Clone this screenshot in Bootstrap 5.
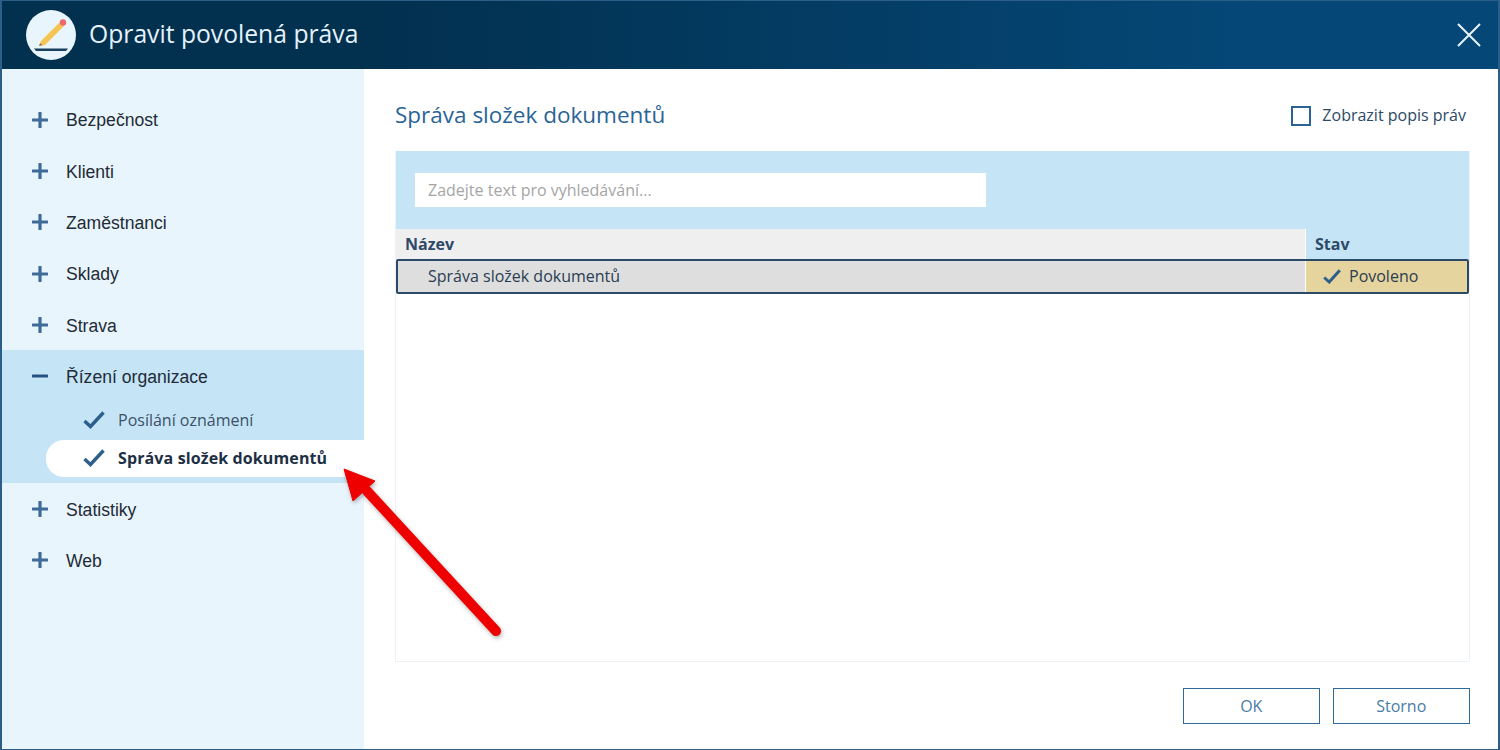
<!DOCTYPE html>
<html lang="cs">
<head>
<meta charset="utf-8">
<title>Opravit povolená práva</title>
<link href="https://cdn.jsdelivr.net/npm/bootstrap@5.3.0/dist/css/bootstrap.min.css" rel="stylesheet">
<style>
html,body{height:100%;margin:0;overflow:hidden}
body{font-family:"Open Sans","Liberation Sans",sans-serif;background:#fff}
.dlg{width:1500px;height:750px;border:1px solid #2b5f8a;border-left-width:2px;border-right-width:2px;position:relative;display:flex;flex-direction:column}
.dlg-head{height:68px;flex:none;background:linear-gradient(90deg,#02304f 0%,#02304f 25%,#054878 85%,#054878 100%);color:#e6f2fb;padding-left:24px;padding-right:17px}
.dlg-logo{width:50px;height:50px;flex:none;margin-right:13px}
.dlg-title{font-size:24.700px;line-height:1;margin-top:-1px}
.dlg-body{flex:1;min-height:0}
.side{width:362px;flex:none;background:#e9f5fc;padding-top:25px}
.tree-row{height:51.300px;padding-left:30px;padding-top:2px;font-family:"Liberation Sans",Arial,sans-serif;font-size:17.600px;color:#222b36}
.tree-row svg{width:16px;height:16px;margin-right:18px;margin-top:-2px;flex:none}
.tree-open{background:#c5e4f6;height:133px}
.tree-open .tree-row{height:51px}
.sub-row{height:37px;margin-left:44px;padding-left:37px;padding-bottom:2px;font-size:16px;color:#3d5166}
.sub-row svg{width:22px;height:18px;margin-right:13px;margin-bottom:-1px;flex:none}
.sub-first{height:39px}
.sub-active{background:#fff;border-radius:18px 0 0 18px;color:#1d2f44;font-weight:700;letter-spacing:.12px}
.content{flex:1;min-width:0;padding:29px 28px 24px 31px}
.pg-head{height:36px;margin-bottom:17px;padding-top:0}
.pg-title{font-size:22.500px;line-height:1;color:#2a6496;margin-top:-2px}
.chk{width:20px;height:20px;border:2px solid #2a6496;background:#fff;margin-right:11px;flex:none;margin-top:-1px}
.chk-label{font-size:16px;color:#2d4a66;margin-right:4px;margin-top:-2px}
.panel{height:511px;border:1px solid #edf2f8;border-top:0}
.search{height:78px;background:#c5e4f6;padding:22px 19px}
.search-in{width:571px;height:34px;background:#fff;color:#a5a5a5;font-size:16px;padding:0 13px;border:0;border-radius:0;box-shadow:none;font-family:inherit}
.search-in::placeholder{color:#a5a5a5;opacity:1}
.grid-head{height:30px;font-weight:700;font-size:16px;color:#2f4a68}
.gh-a{flex:1;background:#efefef;padding-left:9px}
.gh-b{width:163px;margin-left:1px;background:#c5e4f6;padding-left:9px}
.grid-row{height:34.500px;border:2px solid #2b4a68;border-radius:2px;font-size:16px;color:#2a3d52;background:#dedede}
.gr-a{flex:1;padding-left:30px}
.gr-b{width:162px;background:#e6d49e;border-left:1px solid #fff;padding-left:17px}
.gr-b svg{width:18px;height:15px;margin-right:8px;flex:none}
.dlg-foot{margin-top:25.500px;gap:12.500px}
.act{width:137.500px;height:36.500px;border:1.500px solid #2f6a9a;border-radius:0;background:#fff;color:#4a7ca5;font-size:16px;padding:0;font-family:inherit}
.arrow{position:absolute;left:0;top:0;pointer-events:none;filter:drop-shadow(1px 2px 2px rgba(0,0,0,.3))}
</style>
</head>
<body>
<div class="dlg">
  <div class="dlg-head d-flex align-items-center">
    <svg class="dlg-logo" viewBox="0 0 50 50">
      <circle cx="25" cy="25" r="25" fill="#e9f5fc"/>
      <path d="M8 39.500a25 25 0 0 0 2 2.500h30a25 25 0 0 0 2-2.500z" fill="#1b3f5f" transform="translate(0 -1)"/>
      <path d="M13 36l2-5L34 12l4 4L19 35z" fill="#f6c453"/>
      <path d="M13 36l1.200-3 2.300 2.300z" fill="#8a7d70"/>
      <circle cx="37" cy="12.500" r="3.200" fill="#ee6a6a"/>
    </svg>
    <div class="dlg-title">Opravit povolená práva</div>
    <svg class="ms-auto" width="24" height="24" viewBox="0 0 24 24"><path d="M1 1l22 22M23 1L1 23" stroke="#e9f3fa" stroke-width="2" fill="none"/></svg>
  </div>
  <div class="dlg-body d-flex">
    <div class="side">
      <div class="tree-row d-flex align-items-center"><svg viewBox="0 0 16 16"><path d="M8 1v14M1 8h14" stroke="#3f6b98" stroke-width="3.200" stroke-linecap="round"/></svg>Bezpečnost</div>
      <div class="tree-row d-flex align-items-center"><svg viewBox="0 0 16 16"><path d="M8 1v14M1 8h14" stroke="#3f6b98" stroke-width="3.200" stroke-linecap="round"/></svg>Klienti</div>
      <div class="tree-row d-flex align-items-center"><svg viewBox="0 0 16 16"><path d="M8 1v14M1 8h14" stroke="#3f6b98" stroke-width="3.200" stroke-linecap="round"/></svg>Zaměstnanci</div>
      <div class="tree-row d-flex align-items-center"><svg viewBox="0 0 16 16"><path d="M8 1v14M1 8h14" stroke="#3f6b98" stroke-width="3.200" stroke-linecap="round"/></svg>Sklady</div>
      <div class="tree-row d-flex align-items-center"><svg viewBox="0 0 16 16"><path d="M8 1v14M1 8h14" stroke="#3f6b98" stroke-width="3.200" stroke-linecap="round"/></svg>Strava</div>
      <div class="tree-open">
        <div class="tree-row d-flex align-items-center"><svg viewBox="0 0 16 16"><path d="M1 8h14" stroke="#24527f" stroke-width="3.200" stroke-linecap="round"/></svg>Řízení organizace</div>
        <div class="sub-row sub-first d-flex align-items-center"><svg viewBox="0 0 22 18"><path d="M1.500 10l6 5.500L20.500 1.500" stroke="#2d5f8c" stroke-width="3.400" fill="none"/></svg>Posílání oznámení</div>
        <div class="sub-row sub-active d-flex align-items-center"><svg viewBox="0 0 22 18"><path d="M1.500 10l6 5.500L20.500 1.500" stroke="#2d5f8c" stroke-width="3.400" fill="none"/></svg>Správa složek dokumentů</div>
      </div>
      <div class="tree-row d-flex align-items-center"><svg viewBox="0 0 16 16"><path d="M8 1v14M1 8h14" stroke="#3f6b98" stroke-width="3.200" stroke-linecap="round"/></svg>Statistiky</div>
      <div class="tree-row d-flex align-items-center"><svg viewBox="0 0 16 16"><path d="M8 1v14M1 8h14" stroke="#3f6b98" stroke-width="3.200" stroke-linecap="round"/></svg>Web</div>
    </div>
    <div class="content">
      <div class="pg-head d-flex align-items-center">
        <div class="pg-title">Správa složek dokumentů</div>
        <div class="chk ms-auto"></div>
        <div class="chk-label">Zobrazit popis práv</div>
      </div>
      <div class="panel">
        <div class="search"><input class="form-control search-in" type="text" placeholder="Zadejte text pro vyhledávání..."></div>
        <div class="grid-head d-flex">
          <div class="gh-a d-flex align-items-center">Název</div>
          <div class="gh-b d-flex align-items-center">Stav</div>
        </div>
        <div class="grid-row d-flex">
          <div class="gr-a d-flex align-items-center">Správa složek dokumentů</div>
          <div class="gr-b d-flex align-items-center"><svg viewBox="0 0 18 15"><path d="M1.200 8.500l5 4.500L16.800 1.200" stroke="#2d5f8c" stroke-width="3" fill="none"/></svg>Povoleno</div>
        </div>
      </div>
      <div class="dlg-foot d-flex justify-content-end">
        <button class="btn act" type="button">OK</button>
        <button class="btn act" type="button">Storno</button>
      </div>
    </div>
  </div>
  <svg class="arrow" width="1500" height="750" viewBox="0 0 1500 750" style="margin:-1px 0 0 -2px">
    <path d="M496 631L367 491" stroke="#ee0000" stroke-width="10" stroke-linecap="round" fill="none"/>
    <path d="M344 469L375 481L353 501z" fill="#ee0000" stroke="#ee0000" stroke-width="1"/>
  </svg>
</div>
<script src="https://cdn.jsdelivr.net/npm/bootstrap@5.3.0/dist/js/bootstrap.bundle.min.js"></script>
</body>
</html>
